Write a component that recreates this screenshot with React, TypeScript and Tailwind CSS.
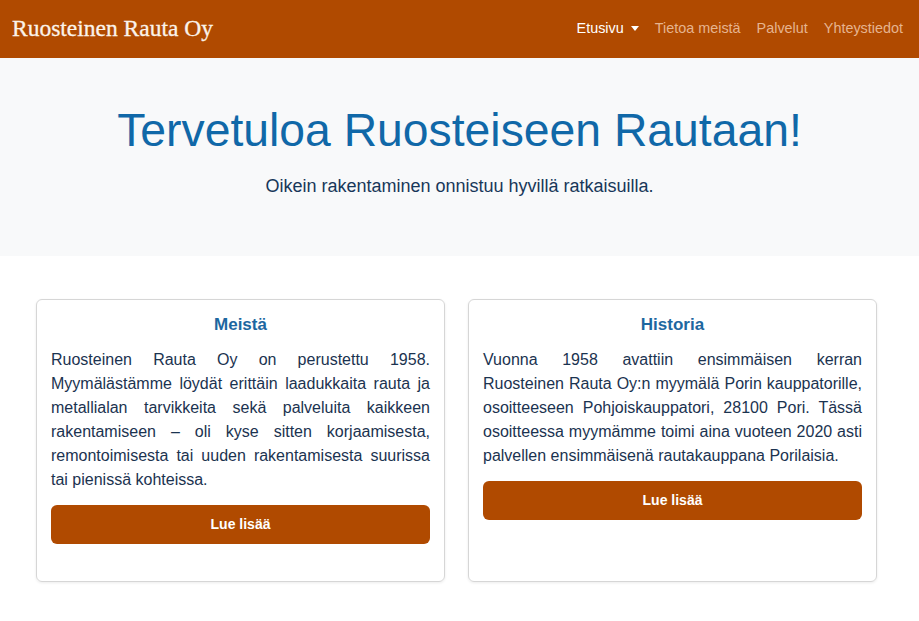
export default function App() {
  const cards = [
    {
      title: 'Meistä',
      text: 'Ruosteinen Rauta Oy on perustettu 1958. Myymälästämme löydät erittäin laadukkaita rauta ja metallialan tarvikkeita sekä palveluita kaikkeen rakentamiseen – oli kyse sitten korjaamisesta, remontoimisesta tai uuden rakentamisesta suurissa tai pienissä kohteissa.',
    },
    {
      title: 'Historia',
      text: 'Vuonna 1958 avattiin ensimmäisen kerran Ruosteinen Rauta Oy:n myymälä Porin kauppatorille, osoitteeseen Pohjoiskauppatori, 28100 Pori. Tässä osoitteessa myymämme toimi aina vuoteen 2020 asti palvellen ensimmäisenä rautakauppana Porilaisia.',
    },
  ];

  return (
    <div className="min-h-screen bg-white font-['Liberation_Sans',Arial,sans-serif]">
      {/* Navbar */}
      <nav className="h-[58px] bg-[#b04a00] flex items-center justify-between pl-3 pr-4">
        <span className="font-['Liberation_Serif',serif] text-[23.5px] text-[#fbf3ea] leading-none [-webkit-text-stroke:0.3px_#fbf3ea]">
          Ruosteinen Rauta Oy
        </span>
        <ul className="flex items-center text-[14.4px]">
          <li className="px-2 flex items-center text-white">
            Etusivu
            <span className="ml-[7px] inline-block w-0 h-0 border-l-[4.5px] border-r-[4.5px] border-t-[5px] border-l-transparent border-r-transparent border-t-white" />
          </li>
          <li className="px-2 text-[#e6b48f]">Tietoa meistä</li>
          <li className="px-2 text-[#e6b48f]">Palvelut</li>
          <li className="pl-2 text-[#e6b48f]">Yhteystiedot</li>
        </ul>
      </nav>

      {/* Hero */}
      <header className="h-[198px] bg-[#f8f9fa] flex flex-col items-center pt-[44px]">
        <h1 className="text-[46.3px] leading-[56px] text-[#1068a8]">Tervetuloa Ruosteiseen Rautaan!</h1>
        <p className="mt-[16px] text-[18px] leading-[24px] text-[#173759]">
          Oikein rakentaminen onnistuu hyvillä ratkaisuilla.
        </p>
      </header>

      {/* Cards */}
      <section className="grid grid-cols-2 gap-[23px] pl-[36px] pr-[42px] mt-[43px]">
        {cards.map((c) => (
          <div
            key={c.title}
            className="border border-[#d6d6d6] rounded-[6px] shadow-[0_1px_3px_rgba(0,0,0,0.08)] px-[14px] pt-[15px] pb-4 flex flex-col"
          >
            <h5 className="text-center font-bold text-[17px] leading-[19px] text-[#1d67a0]">{c.title}</h5>
            <p className="mt-[14px] text-[16px] leading-[24px] text-[#1b3350] text-justify">{c.text}</p>
            <button className="mt-[13px] mb-[21px] h-[39px] w-full rounded-[6px] bg-[#b04a00] text-white font-bold text-[14px]">
              Lue lisää
            </button>
          </div>
        ))}
      </section>
    </div>
  );
}
